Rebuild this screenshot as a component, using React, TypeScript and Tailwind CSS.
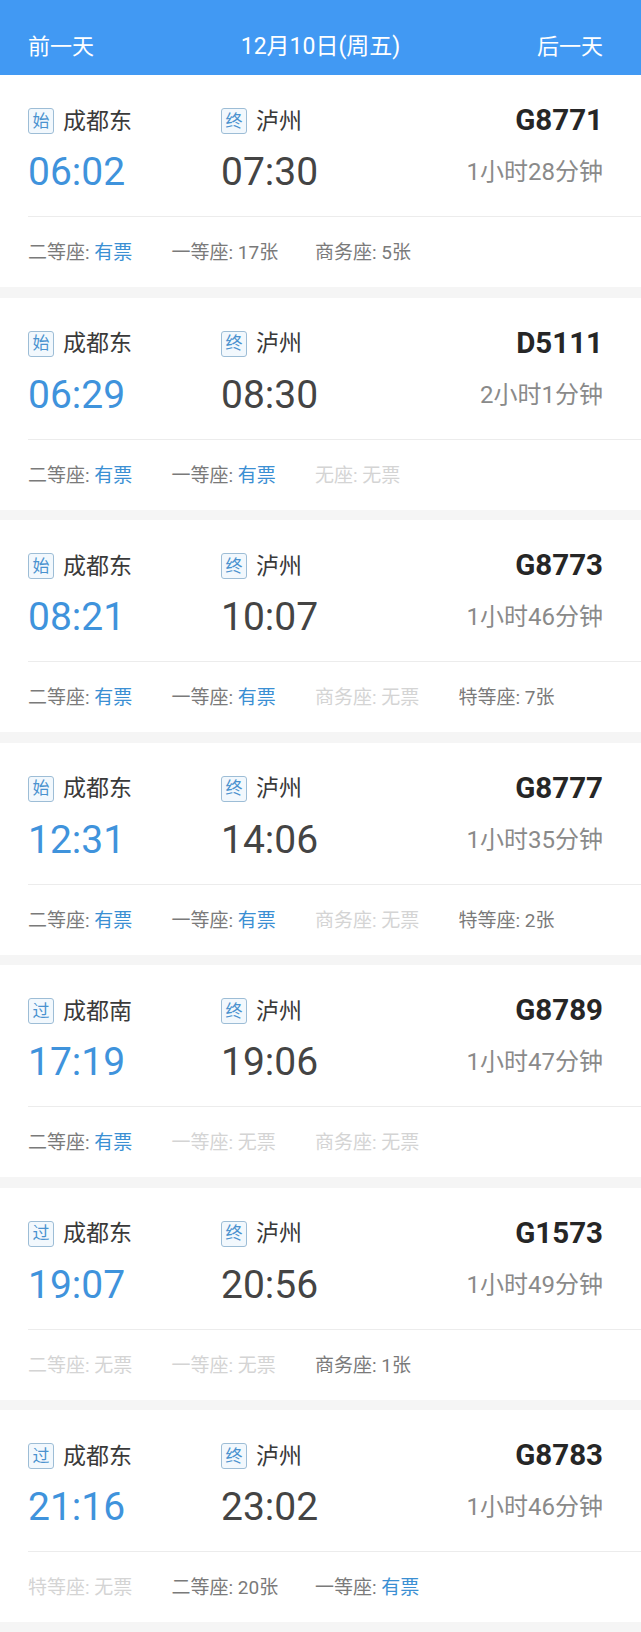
// 列车时刻列表
type Seat = { name: string; value: string };

type Train = {
  id: number;
  fromTag: string;
  from: string;
  depart: string;
  to: string;
  arrive: string;
  code: string;
  duration: string;
  seats: Seat[];
};

const trains: Train[] = [
  {
    id: 1,
    fromTag: '始',
    from: '成都东',
    depart: '06:02',
    to: '泸州',
    arrive: '07:30',
    code: 'G8771',
    duration: '1小时28分钟',
    seats: [
      { name: '二等座', value: '有票' },
      { name: '一等座', value: '17张' },
      { name: '商务座', value: '5张' },
    ],
  },
  {
    id: 2,
    fromTag: '始',
    from: '成都东',
    depart: '06:29',
    to: '泸州',
    arrive: '08:30',
    code: 'D5111',
    duration: '2小时1分钟',
    seats: [
      { name: '二等座', value: '有票' },
      { name: '一等座', value: '有票' },
      { name: '无座', value: '无票' },
    ],
  },
  {
    id: 3,
    fromTag: '始',
    from: '成都东',
    depart: '08:21',
    to: '泸州',
    arrive: '10:07',
    code: 'G8773',
    duration: '1小时46分钟',
    seats: [
      { name: '二等座', value: '有票' },
      { name: '一等座', value: '有票' },
      { name: '商务座', value: '无票' },
      { name: '特等座', value: '7张' },
    ],
  },
  {
    id: 4,
    fromTag: '始',
    from: '成都东',
    depart: '12:31',
    to: '泸州',
    arrive: '14:06',
    code: 'G8777',
    duration: '1小时35分钟',
    seats: [
      { name: '二等座', value: '有票' },
      { name: '一等座', value: '有票' },
      { name: '商务座', value: '无票' },
      { name: '特等座', value: '2张' },
    ],
  },
  {
    id: 5,
    fromTag: '过',
    from: '成都南',
    depart: '17:19',
    to: '泸州',
    arrive: '19:06',
    code: 'G8789',
    duration: '1小时47分钟',
    seats: [
      { name: '二等座', value: '有票' },
      { name: '一等座', value: '无票' },
      { name: '商务座', value: '无票' },
    ],
  },
  {
    id: 6,
    fromTag: '过',
    from: '成都东',
    depart: '19:07',
    to: '泸州',
    arrive: '20:56',
    code: 'G1573',
    duration: '1小时49分钟',
    seats: [
      { name: '二等座', value: '无票' },
      { name: '一等座', value: '无票' },
      { name: '商务座', value: '1张' },
    ],
  },
  {
    id: 7,
    fromTag: '过',
    from: '成都东',
    depart: '21:16',
    to: '泸州',
    arrive: '23:02',
    code: 'G8783',
    duration: '1小时46分钟',
    seats: [
      { name: '特等座', value: '无票' },
      { name: '二等座', value: '20张' },
      { name: '一等座', value: '有票' },
    ],
  },
];

function Tag({ text }: { text: string }) {
  return (
    <span className="flex items-center justify-center w-[26px] h-[26px] rounded-[3px] border border-[#9dbdd6] bg-[#f2f8fd] text-[#4a92cf] text-[17px] leading-none">
      {text}
    </span>
  );
}

function SeatItem({ seat }: { seat: Seat }) {
  const soldOut = seat.value === '无票';
  const plenty = seat.value === '有票';
  return (
    <span
      className={`w-[143.5px] shrink-0 text-[19px] leading-[24px] whitespace-nowrap ${
        soldOut ? 'text-[#d4d4d4]' : 'text-[#7a7a7a]'
      }`}
    >
      {seat.name}: <span className={plenty ? 'text-[#3b8fd3]' : ''}>{seat.value}</span>
    </span>
  );
}

function TrainCard({ train }: { train: Train }) {
  return (
    <div className="bg-white pt-[33px] pb-[22px] pl-[28px]">
      <div className="flex pr-[38px]">
        <div className="w-[193px]">
          <div className="flex items-center h-[26px] gap-[9px]">
            <Tag text={train.fromTag} />
            <span className="text-[23px] text-[#3a3a3a] leading-none">{train.from}</span>
          </div>
          <div className="mt-[15px] text-[39px] leading-[46px] text-[#3f93dc]">{train.depart}</div>
        </div>
        <div className="flex-1">
          <div className="flex items-center h-[26px] gap-[9px]">
            <Tag text="终" />
            <span className="text-[23px] text-[#3a3a3a] leading-none">{train.to}</span>
          </div>
          <div className="mt-[15px] text-[39px] leading-[46px] text-[#444444]">{train.arrive}</div>
        </div>
        <div className="text-right">
          <div className="h-[26px] flex items-center justify-end text-[29.5px] font-bold text-[#262626] leading-none">
            {train.code}
          </div>
          <div className="mt-[15px] h-[46px] flex items-center justify-end text-[24px] text-[#8a8a8a]">
            {train.duration}
          </div>
        </div>
      </div>
      <div className="mt-[21px] h-px bg-[#ececec]" />
      <div className="mt-[24px] flex">
        {train.seats.map((seat) => (
          <SeatItem key={seat.name} seat={seat} />
        ))}
      </div>
    </div>
  );
}

export default function App() {
  return (
    <div
      className="w-[641px] min-h-[1632px] bg-[#f5f5f5]"
      style={{ fontFamily: 'Roboto, "Noto Sans CJK SC", sans-serif' }}
    >
      <div className="h-[75px] bg-[#4199f3] flex justify-between items-start pt-[32px] px-[28px] pr-[38px] text-white text-[22px] leading-[30px]">
        <span>前一天</span>
        <span className="pl-[10px] text-[23px]">12月10日(周五)</span>
        <span>后一天</span>
      </div>
      <div className="flex flex-col gap-[10.5px]">
        {trains.map((train) => (
          <TrainCard key={train.id} train={train} />
        ))}
      </div>
    </div>
  );
}
